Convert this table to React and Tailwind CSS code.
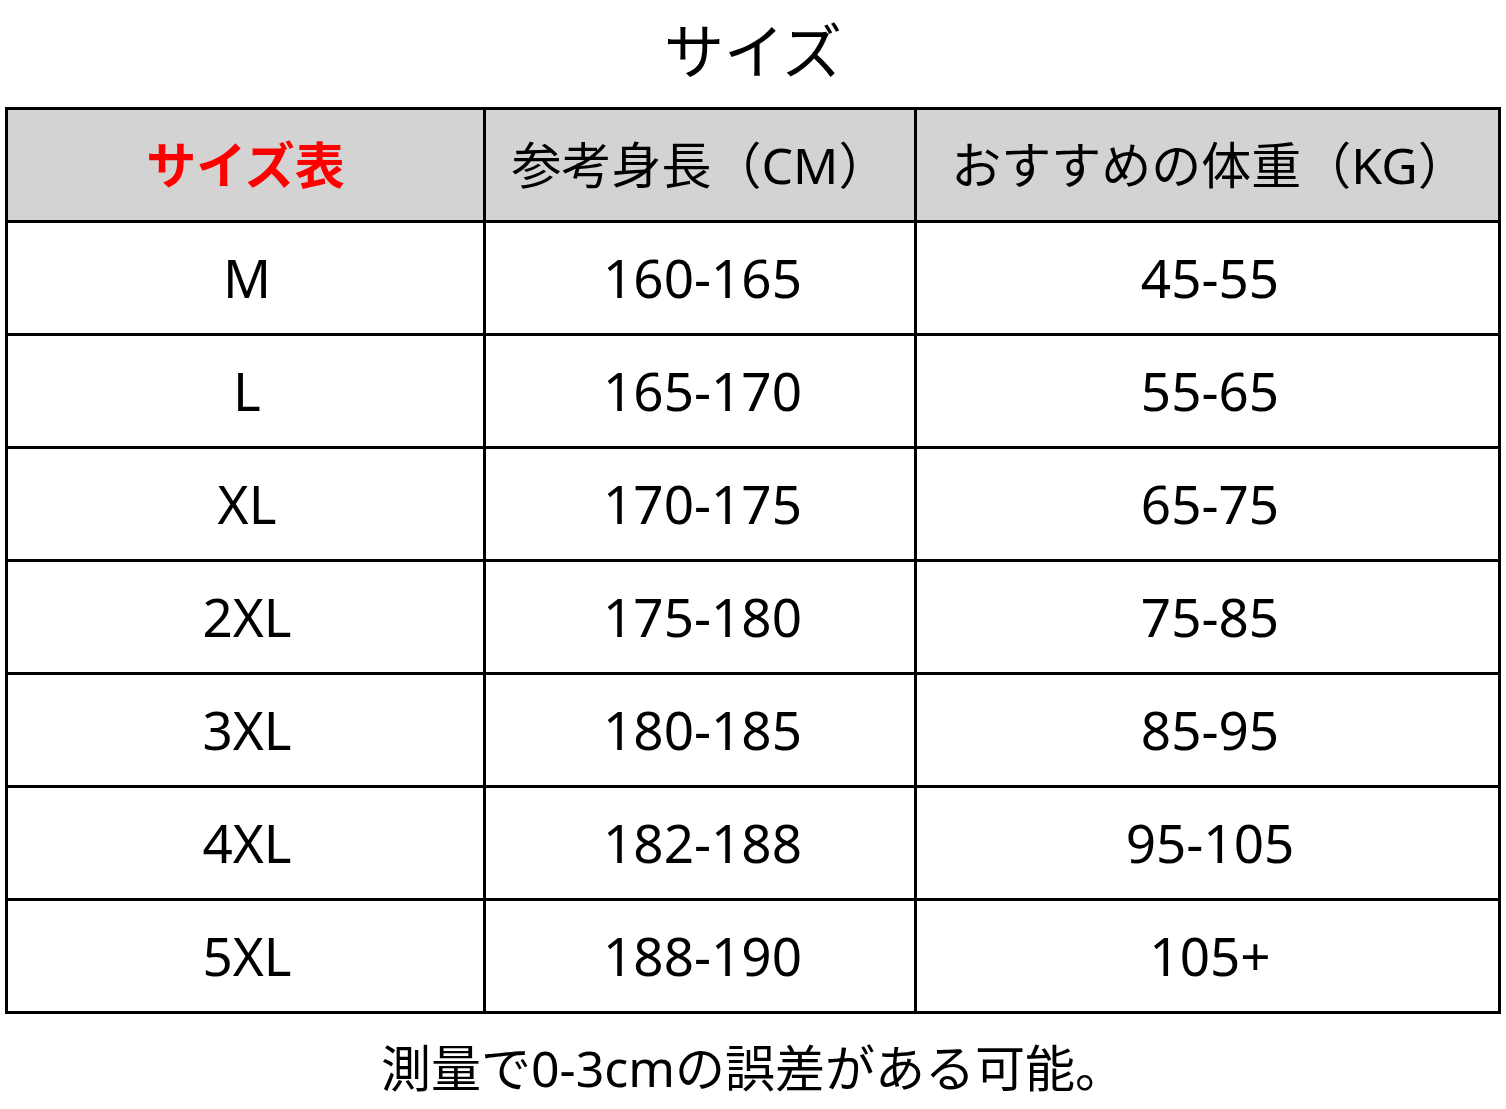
import React from "react";

const rows = [
  ["M", "160-165", "45-55"],
  ["L", "165-170", "55-65"],
  ["XL", "170-175", "65-75"],
  ["2XL", "175-180", "75-85"],
  ["3XL", "180-185", "85-95"],
  ["4XL", "182-188", "95-105"],
  ["5XL", "188-190", "105+"],
];

const font = {
  fontFamily: '"Noto Sans", "Noto Sans CJK JP", sans-serif',
};

export default function App() {
  return (
    <div className="w-[1506px] h-[1109px] bg-white text-black" style={font}>
      {/* Title */}
      <div className="h-[107px] flex items-center justify-center pb-[6px]">
        <h1 className="text-[60px] leading-none font-normal">サイズ</h1>
      </div>

      {/* Size table */}
      <div className="mx-[5px] border-x-[3px] border-t-[3px] border-black grid grid-cols-[478px_431px_1fr]">
        <div className="h-[113px] border-b-[3px] border-r-[3px] border-black bg-[#d3d3d3] flex items-center justify-center">
          <span className="text-[50px] font-bold text-[#ff0000]">サイズ表</span>
        </div>
        <div className="h-[113px] border-b-[3px] border-r-[3px] border-black bg-[#d3d3d3] flex items-center justify-center">
          <span className="text-[50px]">参考身長（CM）</span>
        </div>
        <div className="h-[113px] border-b-[3px] border-black bg-[#d3d3d3] flex items-center justify-center pl-[4px]">
          <span className="text-[50px]">おすすめの体重（KG）</span>
        </div>

        {rows.map((r) => (
          <React.Fragment key={r[0]}>
            <div className="h-[113px] border-b-[3px] border-r-[3px] border-black flex items-center justify-center pl-[3px] text-[53px]">
              {r[0]}
            </div>
            <div className="h-[113px] border-b-[3px] border-r-[3px] border-black flex items-center justify-center pl-[5px] text-[53px]">
              {r[1]}
            </div>
            <div className="h-[113px] border-b-[3px] border-black flex items-center justify-center pl-[5px] text-[53px]">
              {r[2]}
            </div>
          </React.Fragment>
        ))}
      </div>

      {/* Note */}
      <div className="h-[95px] flex items-center justify-center pt-[12px]">
        <p className="text-[50px] leading-none">測量で0-3cmの誤差がある可能。</p>
      </div>
    </div>
  );
}
